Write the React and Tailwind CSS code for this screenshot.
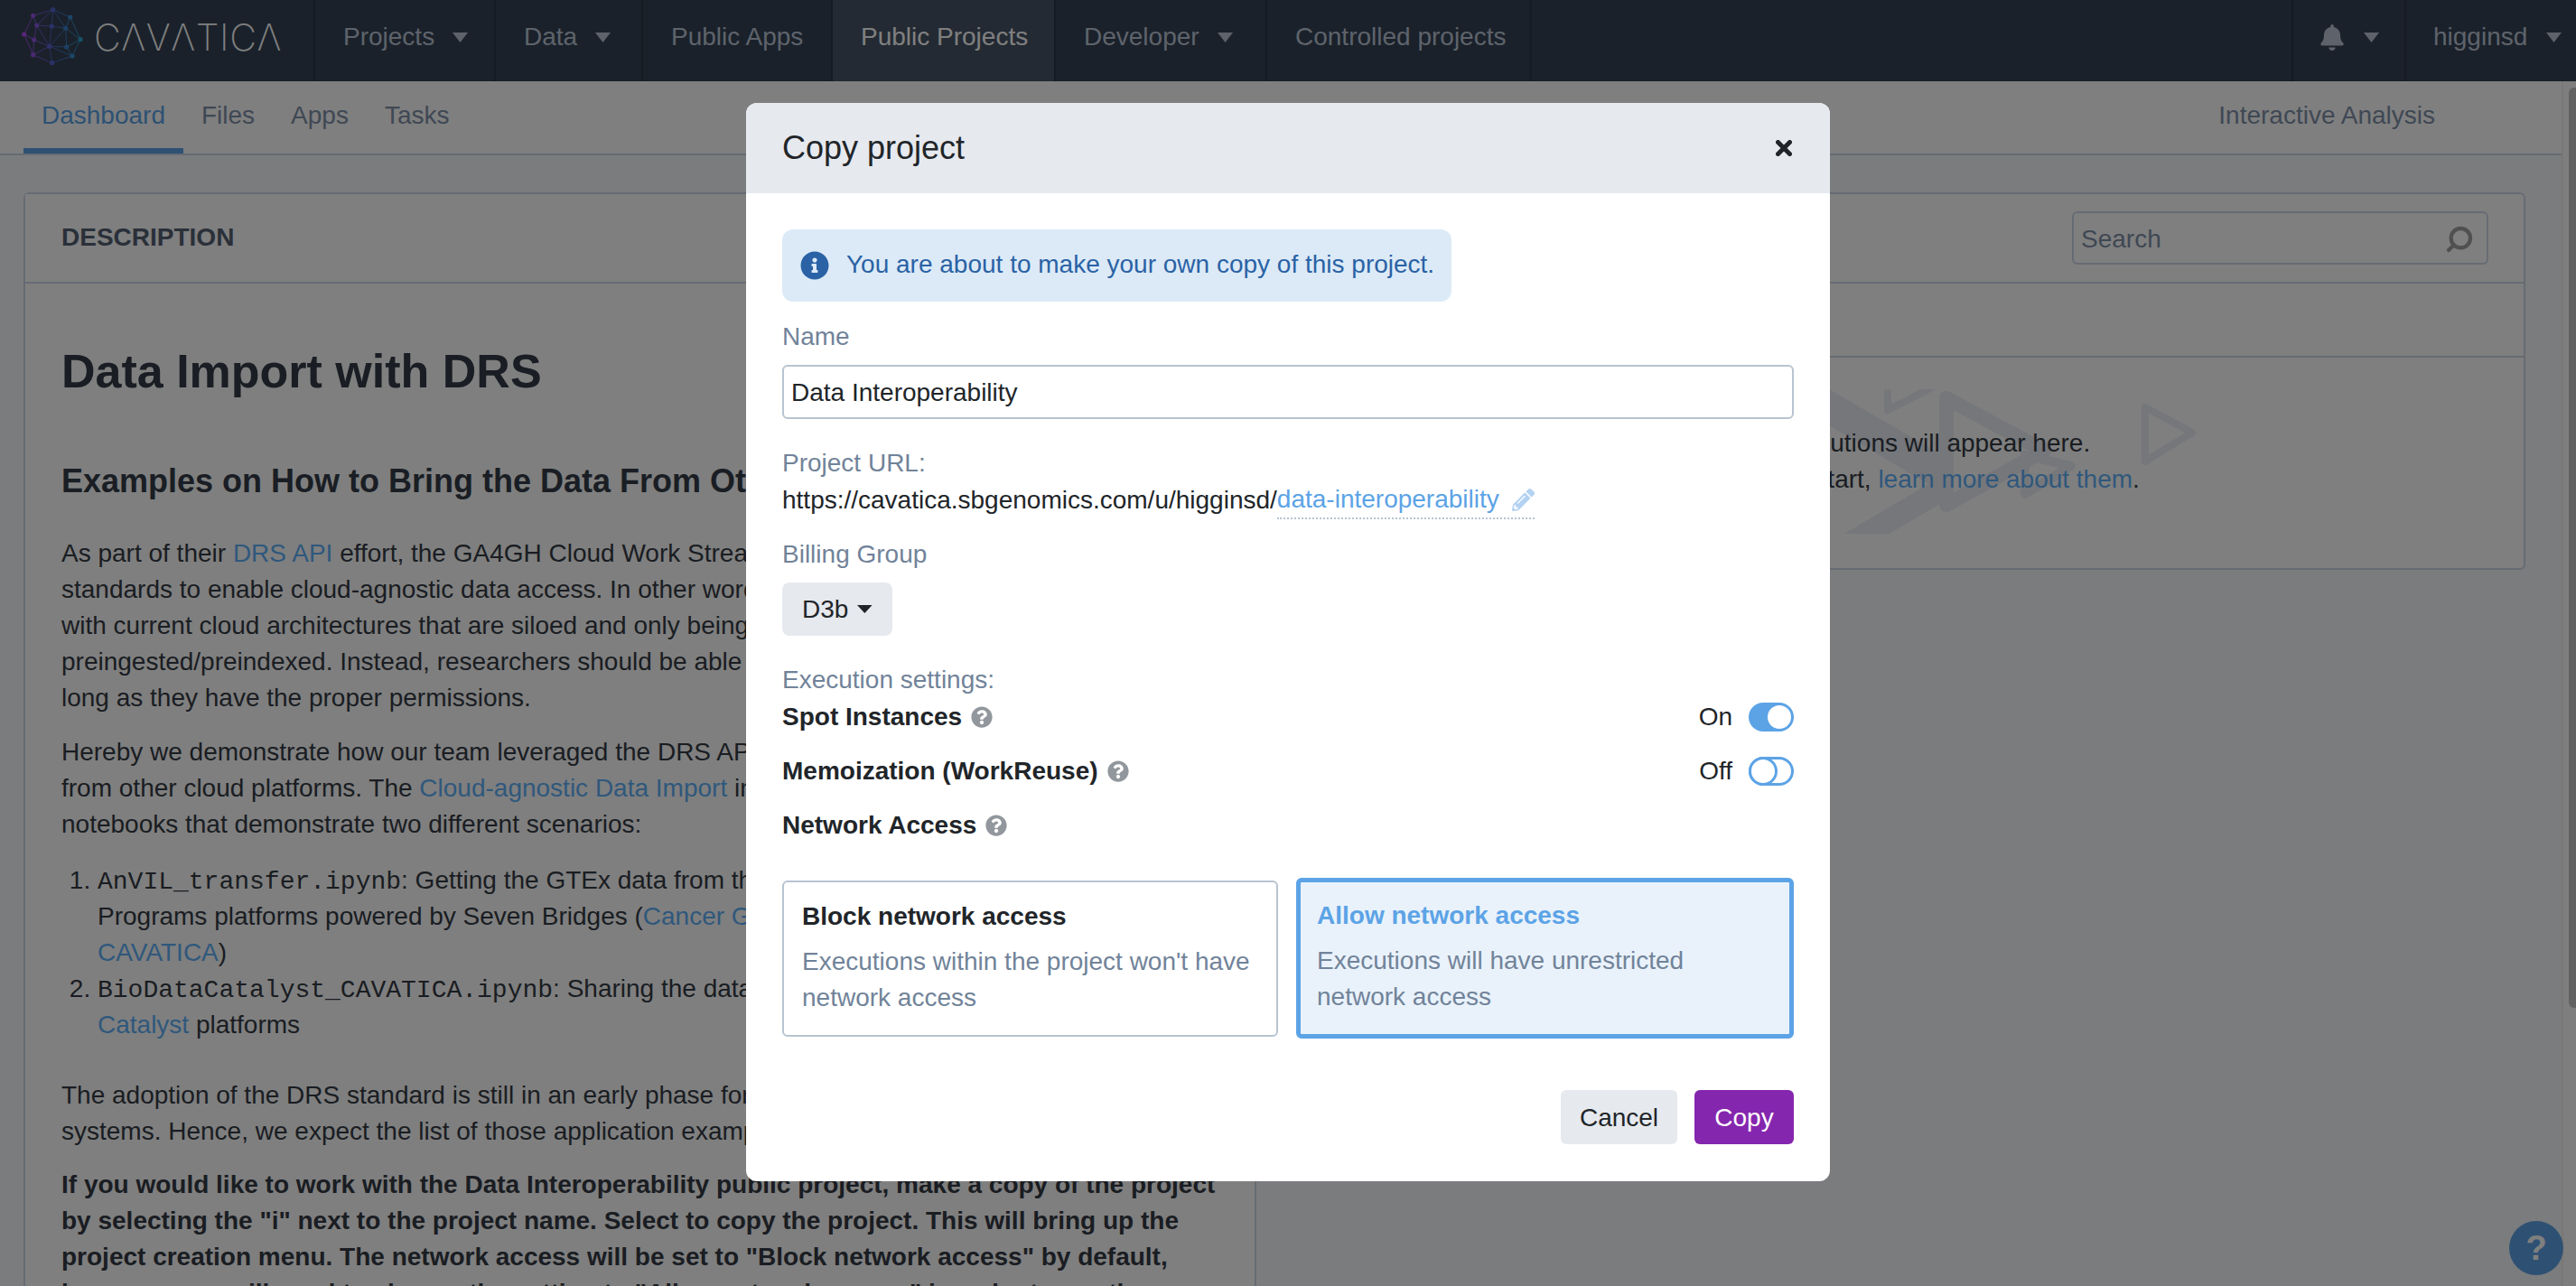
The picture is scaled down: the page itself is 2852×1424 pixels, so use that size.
import { Search } from "lucide-react";
import {
  FaBell,
  FaInfoCircle,
  FaPencilAlt,
  FaQuestionCircle,
} from "react-icons/fa";

const navItems = [
  { label: "Projects", caret: true, width: "w-[200px]" },
  { label: "Data", caret: true, width: "w-[163px]" },
  { label: "Public Apps", width: "w-[210px]" },
  { label: "Public Projects", active: true, width: "w-[247px]" },
  { label: "Developer", caret: true, width: "w-[234px]" },
  { label: "Controlled projects", width: "w-[293px]" },
];

const nodes = {
  A: [58.7, 10.7],
  B: [36.7, 17.3],
  C: [77.7, 19],
  D: [40.7, 28],
  E: [57.3, 29],
  F: [72.7, 31.3],
  G: [26.7, 38],
  H: [37.7, 44],
  I: [89, 43.7],
  J: [54.7, 51.3],
  K: [73.7, 52],
  L: [36.7, 60.7],
  M: [80, 62],
  N: [57.7, 69.7],
};

const edges = "AB AC BG GL LN NM MI IC BD AD AE AF CF DE EF DH GH HL DJ EJ FJ FI FK JK KI KM JM JL JN HJ".split(" ");

function Caret({ className }) {
  return (
    <svg viewBox="0 0 17 11" preserveAspectRatio="none" className={className} fill="currentColor">
      <path d="M0 0h17L8.500 11z" />
    </svg>
  );
}

function Logo() {
  return (
    <div className="flex h-full w-[349px] items-center border-r-2 border-[#2a3646]">
      <svg viewBox="0 0 104 90" className="h-[90px] w-[104px] shrink-0">
        <defs>
          <linearGradient id="logoGrad" gradientUnits="userSpaceOnUse" x1="26" y1="0" x2="90" y2="0">
            <stop offset="0" stopColor="#b44cf0" />
            <stop offset="0.55" stopColor="#4a66c8" />
            <stop offset="1" stopColor="#2aa4cc" />
          </linearGradient>
        </defs>
        {edges.map((e) => (
          <line
            key={e}
            x1={nodes[e[0]][0]}
            y1={nodes[e[0]][1]}
            x2={nodes[e[1]][0]}
            y2={nodes[e[1]][1]}
            stroke="url(#logoGrad)"
            strokeWidth="0.9"
          />
        ))}
        {Object.entries(nodes).map(([k, [x, y]]) => (
          <circle key={k} cx={x} cy={y} r="2.6" fill="url(#logoGrad)" />
        ))}
      </svg>
      <span className="pb-[8px] font-['Inter',sans-serif] text-[41px] font-extralight leading-none tracking-[0.6px] text-white">
        CΛVΛTICΛ
      </span>
    </div>
  );
}

function TopNav() {
  return (
    <nav className="flex h-[90px] shrink-0 items-center bg-[#344254] text-[#bcc6d6]">
      <Logo />
      {navItems.map((item) => (
        <div
          key={item.label}
          className={`flex h-full ${item.width} items-center border-r-2 border-[#2a3646] pb-[8px] pl-[31px] ${
            item.active ? "bg-[#465466] text-white" : ""
          }`}
        >
          {item.label}
          {item.caret && <Caret className="ml-[20px] h-[11px] w-[17px]" />}
        </div>
      ))}
      <div className="ml-auto flex h-full w-[127px] items-center border-x-2 border-[#2a3646] pb-[8px] pl-[30px]">
        <FaBell className="h-[29px] w-[26px]" />
        <Caret className="ml-[22px] h-[11px] w-[17px]" />
      </div>
      <div className="flex h-full w-[188px] items-center pb-[8px] pl-[30px]">
        higginsd
        <Caret className="ml-[21px] h-[11px] w-[17px]" />
      </div>
    </nav>
  );
}

function SubTabs() {
  return (
    <div className="flex h-[82px] shrink-0 items-stretch border-b-2 border-[#ccd6e6] bg-white pl-[26px] pr-[140px] text-[#7e90a8]">
      <div className="flex items-center border-b-[6px] border-[#5ca3e6] px-5 pt-[2px] text-[#5ca3e6]">Dashboard</div>
      <div className="flex items-center px-5 pb-[4px]">Files</div>
      <div className="flex items-center px-5 pb-[4px]">Apps</div>
      <div className="flex items-center px-5 pb-[4px]">Tasks</div>
      <div className="ml-auto flex items-center pb-[4px]">Interactive Analysis</div>
    </div>
  );
}

function Link({ children }) {
  return <span className="text-[#5fb0f8]">{children}</span>;
}

function Code({ children }) {
  return <code className="font-['Liberation_Mono',monospace] text-[28px] leading-none">{children}</code>;
}

function Description() {
  return (
    <section className="w-[1365px] shrink-0 border-x-2 border-t-2 border-[#ccd6e6] bg-white">
      <div className="flex h-[99px] items-center border-b-2 border-[#ccd6e6] pb-[2px] pl-[40px] font-bold uppercase text-[#556172]">
        Description
      </div>
      <div className="whitespace-nowrap px-[40px] text-[#343a44]">
        <h1 className="mt-[66px] text-[52px] font-bold leading-[62px] text-[#343c48]">Data Import with DRS</h1>
        <h2 className="mt-[69px] text-[36px] font-bold leading-[44px] text-[#343c48]">
          Examples on How to Bring the Data From Other Cloud Platforms
        </h2>
        <p className="mt-[38px]">
          As part of their <Link>DRS API</Link> effort, the GA4GH Cloud Work Stream has developed a set of
          <br />
          standards to enable cloud-agnostic data access. In other words, researchers should not have
          <br />
          with current cloud architectures that are siloed and only being able to access data that is
          <br />
          preingested/preindexed. Instead, researchers should be able to work with data anywhere, as
          <br />
          long as they have the proper permissions.
        </p>
        <p className="mt-[20px]">
          Hereby we demonstrate how our team leveraged the DRS API to bring data to CAVATICA
          <br />
          from other cloud platforms. The <Link>Cloud-agnostic Data Import</Link> includes two Jupyter
          <br />
          notebooks that demonstrate two different scenarios:
        </p>
        <ol className="mt-[22px] list-decimal pl-[40px]">
          <li>
            <Code>AnVIL_transfer.ipynb</Code>: Getting the GTEx data from the AnVIL into Cancer Research
            <br />
            Programs platforms powered by Seven Bridges (<Link>Cancer Genomics Cloud</Link> and
            <br />
            <Link>CAVATICA</Link>)
          </li>
          <li>
            <Code>BioDataCatalyst_CAVATICA.ipynb</Code>: Sharing the data between the BioData
            <br />
            <Link>Catalyst</Link> platforms
          </li>
        </ol>
        <p className="mt-[38px]">
          The adoption of the DRS standard is still in an early phase for many of the application
          <br />
          systems. Hence, we expect the list of those application examples to grow over time.
        </p>
        <p className="mt-[19px] font-bold">
          If you would like to work with the Data Interoperability public project, make a copy of the project
          <br />
          by selecting the "i" next to the project name. Select to copy the project. This will bring up the
          <br />
          project creation menu. The network access will be set to "Block network access" by default,
          <br />
          however, you will need to change the setting to "Allow network access" in order to run the
        </p>
      </div>
    </section>
  );
}

function Watermark() {
  return (
    <svg
      viewBox="2026 432 420 160"
      className="absolute left-[634px] top-[35px] h-[160px] w-[420px] text-[#eaeef6]"
    >
      <path fill="currentColor" d="M2026 432L2164 512V550L2093 592H2043L2136 537L2026 472Z" />
      <path
        fill="none"
        stroke="currentColor"
        strokeWidth="16"
        strokeLinejoin="round"
        d="M2156 442V560L2264 500Z"
      />
      <path
        fill="none"
        stroke="currentColor"
        strokeWidth="10"
        strokeLinejoin="round"
        d="M2243 505V548L2294 517Z"
      />
      <path
        fill="none"
        stroke="currentColor"
        strokeWidth="8"
        strokeLinejoin="round"
        d="M2376 452V512L2428 480Z"
      />
      <path fill="none" stroke="currentColor" strokeWidth="8" strokeLinejoin="round" d="M2091 425V455L2144 428" />
    </svg>
  );
}

function Executions() {
  return (
    <section className="h-[418px] flex-1 rounded-br-md rounded-tr-md border-y-2 border-r-2 border-[#ccd6e6] bg-white">
      <div className="flex h-[99px] items-center justify-end border-b-2 border-[#ccd6e6] pr-[39px]">
        <div className="flex h-[59px] w-[461px] items-center justify-between rounded-md border-2 border-[#ccd6e6] pl-2 pr-[14px] pt-[2px] text-[#7e90a8]">
          Search
          <Search className="h-[32px] w-[32px] -scale-x-100 text-[#a0a0a0]" strokeWidth={3.2} />
        </div>
      </div>
      <div className="h-[82px] border-b-2 border-[#ccd6e6]" />
      <div className="relative">
        <Watermark />
        <div className="relative whitespace-nowrap pl-[573px] pt-[75px] text-[#343a44]">
          Executions will appear here.
          <br />
          <span className="ml-[8px]">
            To start, <Link>learn more about them</Link>.
          </span>
        </div>
      </div>
    </section>
  );
}

function Scrollbar() {
  return (
    <div className="w-[16px] shrink-0 border-l-2 border-[#f0f0f0] bg-[#fcfcfc] pl-[6px] pt-[7px]">
      <div className="h-[1019px] w-[8px] rounded-l-md bg-[#c4c4c4]" />
    </div>
  );
}

function HelpIcon() {
  return <FaQuestionCircle className="ml-[10px] h-[24px] w-[24px] text-[#92979d]" />;
}

function Toggle({ on }) {
  if (on) {
    return (
      <div className="flex h-[32px] w-[50px] items-center justify-end rounded-full bg-[#5ca3e6] pr-[3px]">
        <div className="h-[26px] w-[26px] rounded-full bg-white" />
      </div>
    );
  }
  return (
    <div className="h-[32px] w-[50px] rounded-full border-[3px] border-[#5ca3e6]">
      <div className="-m-[3px] h-[32px] w-[32px] rounded-full border-[3px] border-[#5ca3e6] bg-white" />
    </div>
  );
}

function SettingRow({ label, state, on }) {
  return (
    <div className="flex h-[40px] items-center">
      <span className="font-bold">{label}</span>
      <HelpIcon />
      {state && (
        <div className="ml-auto flex items-center gap-[18px]">
          <span>{state}</span>
          <Toggle on={on} />
        </div>
      )}
    </div>
  );
}

function CopyModal() {
  return (
    <div className="absolute inset-0 flex justify-center bg-black/50 pt-[114px]">
      <div className="h-fit w-[1200px] overflow-hidden rounded-[12px] bg-white text-[#212529]">
        <div className="flex h-[100px] items-center justify-between bg-[#e6e9ee] pl-10 pr-[42px]">
          <h2 className="text-[36px]">Copy project</h2>
          <svg viewBox="0 0 18 18" className="h-[18px] w-[18px]">
            <path d="M2.500 2.500l13 13M15.500 2.500l-13 13" stroke="#212529" strokeWidth="5" strokeLinecap="round" />
          </svg>
        </div>
        <div className="px-10 pb-[41px] pt-10">
          <div className="flex h-[80px] w-[741px] items-center gap-[19px] rounded-[12px] bg-[#dceaf7] px-5 text-[#2a62a5]">
            <FaInfoCircle className="h-[32px] w-[32px] shrink-0" />
            <span className="whitespace-nowrap pb-[2px]">You are about to make your own copy of this project.</span>
          </div>

          <div className="mt-[19px] text-[#718399]">Name</div>
          <input
            readOnly
            value="Data Interoperability"
            className="mt-[11px] block h-[60px] w-full rounded-md border-2 border-[#b7c4d1] px-2 pt-[2px] outline-none"
          />

          <div className="mt-[29px] text-[#718399]">Project URL:</div>
          <div className="flex items-center">
            https://cavatica.sbgenomics.com/u/higginsd/
            <span className="flex h-[42px] items-center border-b-2 border-dotted border-[#b7c4d1] text-[#5ca3e6]">
              data-interoperability
              <FaPencilAlt className="ml-[14px] h-[25px] w-[25px] text-[#b3d2f3]" />
            </span>
          </div>

          <div className="mt-[19px] text-[#718399]">Billing Group</div>
          <div className="mt-[11px] flex h-[59px] w-[122px] items-center gap-[10px] rounded-lg bg-[#e6e9ee] px-[22px]">
            D3b
            <Caret className="h-[9px] w-[17px]" />
          </div>

          <div className="mt-[29px] text-[#718399]">Execution settings:</div>
          <div className="mt-px flex flex-col gap-[20px]">
            <SettingRow label="Spot Instances" state="On" on />
            <SettingRow label="Memoization (WorkReuse)" state="Off" />
            <SettingRow label="Network Access" />
          </div>

          <div className="mt-[38px] flex items-center gap-[20px]">
            <div className="h-[173px] w-[549px] rounded-md border-2 border-[#b7c4d1] px-5 pt-[18px]">
              <div className="font-bold">Block network access</div>
              <div className="mt-[10px] text-[#718399]">
                Executions within the project won't have network access
              </div>
            </div>
            <div className="h-[178px] w-[551px] rounded-md border-[5px] border-[#5ca3e6] bg-[#e9f2fb] px-[18px] pt-[17px]">
              <div className="font-bold text-[#5ca3e6]">Allow network access</div>
              <div className="mt-[10px] text-[#718399]">
                Executions will have unrestricted
                <br />
                network access
              </div>
            </div>
          </div>

          <div className="mt-[57px] flex justify-end gap-[19px]">
            <button className="h-[60px] w-[129px] rounded-md bg-[#e6e9ee] pt-[2px]">Cancel</button>
            <button className="h-[60px] w-[110px] rounded-md bg-[#8526ae] pt-[2px] text-white">Copy</button>
          </div>
        </div>
      </div>
    </div>
  );
}

export default function App() {
  return (
    <div className="relative flex h-screen w-full flex-col overflow-hidden bg-[#f6f8fc] font-['Liberation_Sans',Arial,sans-serif] text-[28px] leading-[40px]">
      <TopNav />
      <div className="flex min-h-0 flex-1">
        <div className="min-w-0 flex-1">
          <SubTabs />
          <main className="ml-[26px] mr-[40px] mt-[41px] flex items-start overflow-hidden rounded-t-md">
            <Description />
            <Executions />
          </main>
        </div>
        <Scrollbar />
      </div>
      <div className="absolute bottom-[12px] right-[14px] flex h-[60px] w-[60px] items-center justify-center rounded-full bg-[#5ca3e6] text-[38px] font-bold text-white">
        ?
      </div>
      <CopyModal />
    </div>
  );
}
